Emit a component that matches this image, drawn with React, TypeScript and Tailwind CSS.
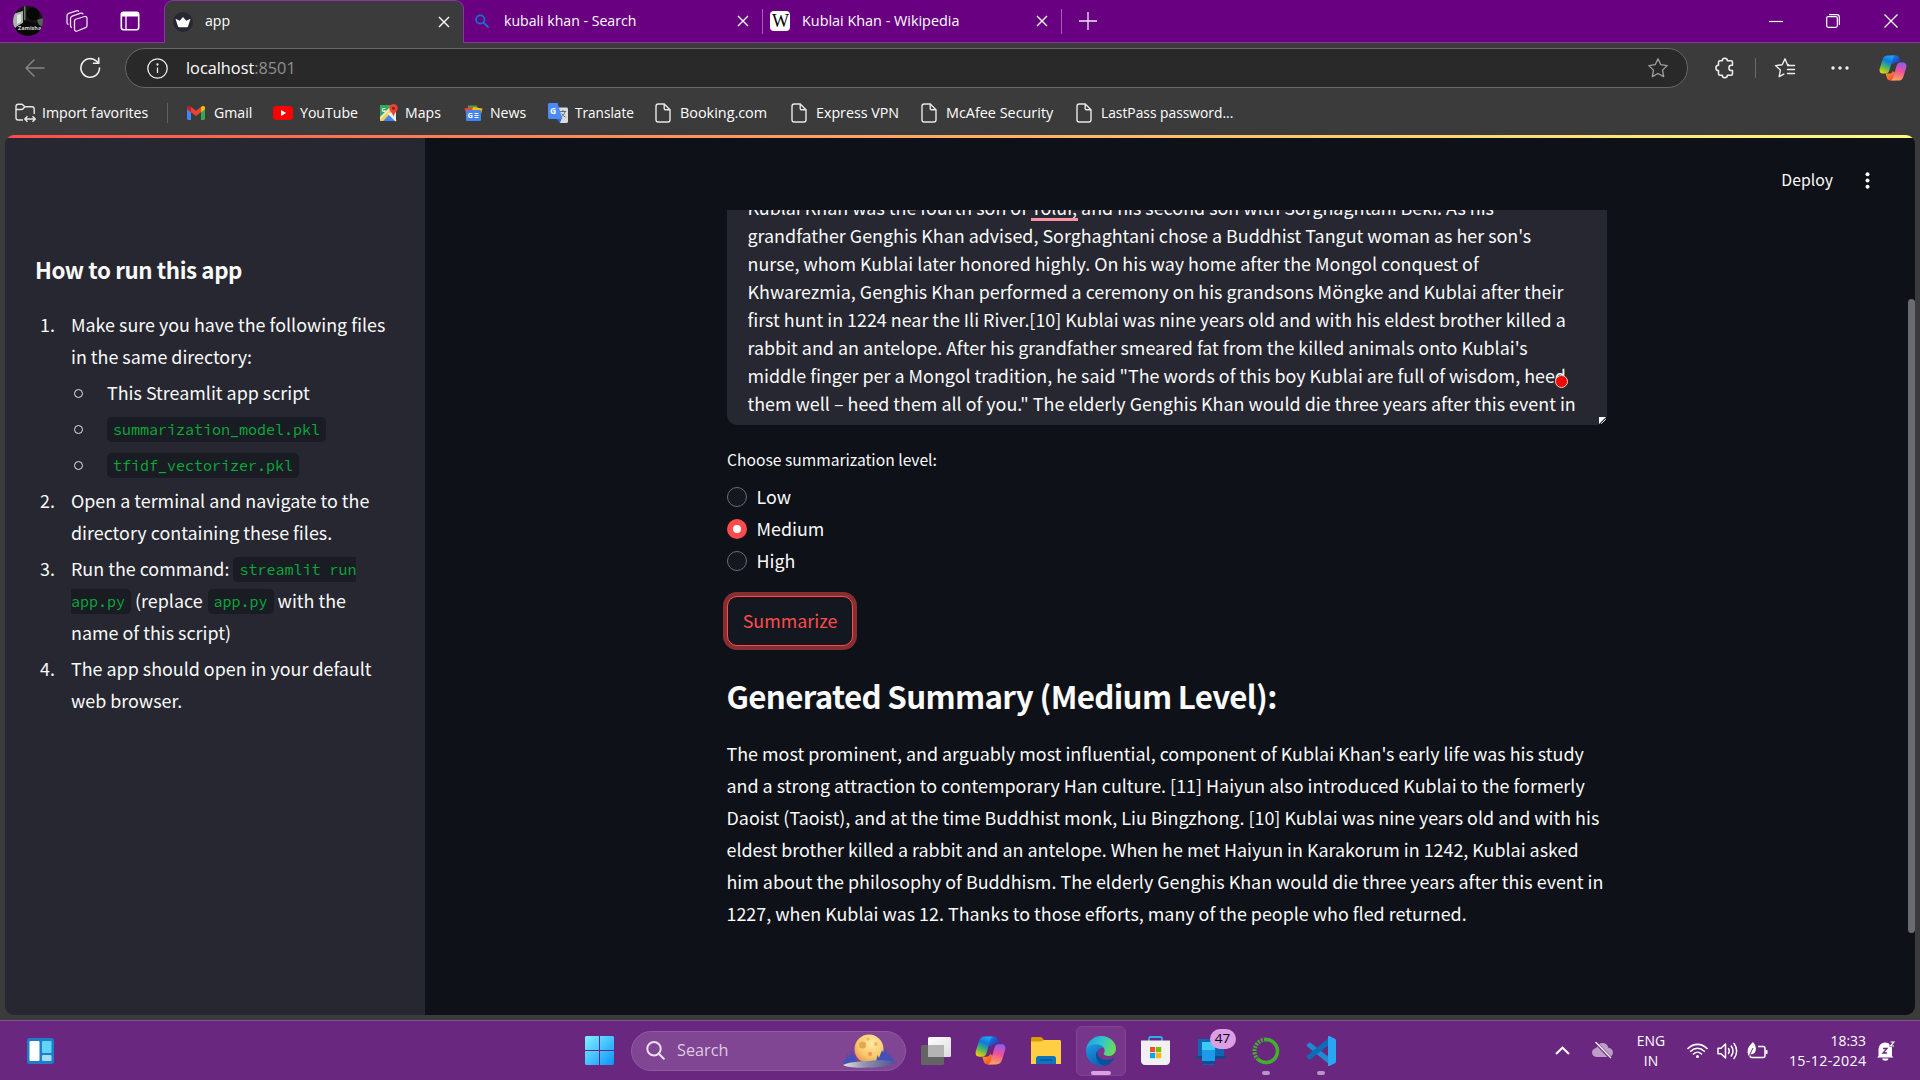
import React from 'react';

const tabItems = [
  { label: 'kubali khan - Search', kind: 'search' },
  { label: 'Kublai Khan - Wikipedia', kind: 'wiki' },
];

const inputLines = [
  'grandfather Genghis Khan advised, Sorghaghtani chose a Buddhist Tangut woman as her son\'s',
  'nurse, whom Kublai later honored highly. On his way home after the Mongol conquest of',
  'Khwarezmia, Genghis Khan performed a ceremony on his grandsons Möngke and Kublai after their',
  'first hunt in 1224 near the Ili River.[10] Kublai was nine years old and with his eldest brother killed a',
  'rabbit and an antelope. After his grandfather smeared fat from the killed animals onto Kublai\'s',
  'middle finger per a Mongol tradition, he said "The words of this boy Kublai are full of wisdom, heed',
  'them well – heed them all of you." The elderly Genghis Khan would die three years after this event in',
];

const summaryLines = [
  'The most prominent, and arguably most influential, component of Kublai Khan\'s early life was his study',
  'and a strong attraction to contemporary Han culture. [11] Haiyun also introduced Kublai to the formerly',
  'Daoist (Taoist), and at the time Buddhist monk, Liu Bingzhong. [10] Kublai was nine years old and with his',
  'eldest brother killed a rabbit and an antelope. When he met Haiyun in Karakorum in 1242, Kublai asked',
  'him about the philosophy of Buddhism. The elderly Genghis Khan would die three years after this event in',
  '1227, when Kublai was 12. Thanks to those efforts, many of the people who fled returned.',
];

/* ---------- icons ---------- */

function CloseX({ className = '' }: { className?: string }) {
  return (
    <svg className={className} width="12" height="12" viewBox="0 0 12 12" fill="none" stroke="white" strokeWidth="1.4">
      <path d="M1 1l10 10M11 1L1 11" />
    </svg>
  );
}

function Copilot({ size }: { size: number }) {
  return (
    <svg width={size} height={size} viewBox="0 0 30 30">
      <defs>
        <linearGradient id="cpA" x1="0.6" y1="0" x2="0.2" y2="1">
          <stop offset="0" stopColor="#1aa3f5" />
          <stop offset="0.3" stopColor="#1277dd" />
          <stop offset="0.6" stopColor="#3fb36d" />
          <stop offset="1" stopColor="#f6d100" />
        </linearGradient>
        <linearGradient id="cpB" x1="0.6" y1="0" x2="0.4" y2="1">
          <stop offset="0" stopColor="#8d5cf6" />
          <stop offset="0.45" stopColor="#ee4f9b" />
          <stop offset="1" stopColor="#fba45a" />
        </linearGradient>
        <linearGradient id="cpC" x1="0" y1="0" x2="1" y2="1">
          <stop offset="0" stopColor="#2285ea" />
          <stop offset="1" stopColor="#1a2fb5" />
        </linearGradient>
        <linearGradient id="cpD" x1="0" y1="0" x2="1" y2="1">
          <stop offset="0" stopColor="#fba31c" />
          <stop offset="1" stopColor="#ee3a3a" />
        </linearGradient>
      </defs>
      <path d="M12 1.5h6.200c2 0 3 1.200 3.600 3l1.200 4h-4c-2 0-3 1-3.500 2.800L13 10z" fill="url(#cpC)" />
      <path d="M18 28.500h-6c-2 0-3-1.200-3.600-3l-1.300-4.500h4c2 0 3-1 3.500-2.800L17 20z" fill="url(#cpD)" />
      <path d="M9.500 1.500h8c-1.500.6-2.300 2-2.800 3.800L11.300 17c-.7 2.500-1.800 4-4.300 4H4.500C1 21 0 18.500.9 15.300L3.800 6C4.700 3 6.500 1.500 9.500 1.500z" fill="url(#cpA)" />
      <path d="M20.500 28.500h-8c1.500-.6 2.300-2 2.800-3.800L18.700 13c.7-2.500 1.800-4 4.300-4h2.500c3.500 0 4.500 2.500 3.600 5.700L26.200 24c-.9 3-2.700 4.500-5.700 4.500z" fill="url(#cpB)" />
    </svg>
  );
}

function DocIcon() {
  return (
    <svg width="16" height="20" viewBox="0 0 16 20" fill="none" stroke="#e8e8e8" strokeWidth="1.400">
      <path d="M3.200 1h6L15 6.800v10c0 1.300-.9 2.200-2.200 2.200H3.200C1.900 19 1 18.100 1 16.800V3.200C1 1.900 1.900 1 3.200 1z" />
      <path d="M9.200 1v4.500c0 .8.500 1.300 1.300 1.300H15" />
    </svg>
  );
}

function ImportIcon() {
  return (
    <svg width="21" height="20" viewBox="0 0 21 20" fill="none" stroke="#e8e8e8" strokeWidth="1.400">
      <path d="M8 17H3.200C1.900 17 1 16.100 1 14.800V3.500C1 2.200 1.900 1.300 3.200 1.300h3.300c.6 0 1.100.2 1.500.6L9.800 3.700H17c1.300 0 2.200.9 2.200 2.200V11" />
      <path d="M1 6.500h5.500c.7 0 1.200-.2 1.600-.7l1.700-2.100" />
      <path d="M10 16h10M12.500 13.200L9.800 16l2.700 2.800M17.500 13.200l2.700 2.800-2.700 2.800" />
    </svg>
  );
}

function GmailIcon() {
  return (
    <svg width="18" height="14" viewBox="0 0 18 14">
      <path d="M0 1.800V12.600C0 13.400.6 14 1.400 14H4V5z" fill="#4285f4" />
      <path d="M18 1.800V12.600c0 .8-.6 1.400-1.400 1.400H14V5z" fill="#34a853" />
      <path d="M4 .9V6.300L9 10l5-3.700V.9L9 4.700z" fill="#ea4335" />
      <path d="M0 1.800V3.300L4 6.300V.9L3.300.4C1.900-.6 0 .2 0 1.800z" fill="#c5221f" />
      <path d="M18 1.800V3.300L14 6.300V.9l.7-.5C16.100-.6 18 .2 18 1.800z" fill="#fbbc04" />
    </svg>
  );
}

function YouTubeIcon() {
  return (
    <svg width="20" height="14" viewBox="0 0 20 14">
      <rect width="20" height="14" rx="3.500" fill="#f00" />
      <path d="M8 4l5.200 3L8 10z" fill="#fff" />
    </svg>
  );
}

function MapsIcon() {
  return (
    <svg width="18" height="18" viewBox="0 0 18 18">
      <rect y="1" width="16" height="16" rx="1.500" fill="#e8eaed" />
      <path d="M0 2.500C0 1.700.7 1 1.500 1H12L0 13z" fill="#34a853" />
      <path d="M0 15.500L10 5.500l2 2L3 17H1.500C.7 17 0 16.300 0 15.500z" fill="#fbd04a" />
      <path d="M3 17l6-6.300 6.500 6.100-.5.200z" fill="#4285f4" />
      <path d="M8 8.800L16 17" stroke="#fff" strokeWidth="1.200" />
      <text x="1.500" y="7.500" fontSize="6" fontWeight="700" fill="#fff" fontFamily="Open Sans">G</text>
      <path d="M13.500 0A4.200 4.200 0 0 0 9.300 4.200c0 3 3 3.800 4.200 8.300 1.200-4.500 4.200-5.300 4.200-8.300A4.200 4.200 0 0 0 13.500 0z" fill="#ea4335" />
      <circle cx="13.500" cy="4.200" r="1.500" fill="#8c1d13" />
    </svg>
  );
}

function NewsIcon() {
  return (
    <svg width="19" height="16" viewBox="0 0 19 16">
      <path d="M4 .5h9l1 4H4z" fill="#34a853" />
      <path d="M.5 3.500L10 1.500l1 4-9 3z" fill="#ea4335" />
      <path d="M9 2l9.500 1.500L17 9 8 6z" fill="#fbbc04" />
      <rect x="2" y="5" width="15" height="11" rx="1.200" fill="#4285f4" />
      <text x="3.500" y="13.300" fontSize="7.500" fontWeight="700" fill="#fff" fontFamily="Open Sans">G</text>
      <path d="M10.500 8.500h4M10.500 10.500h4M10.500 12.500h4" stroke="#fff" strokeWidth="1" />
    </svg>
  );
}

function TranslateIcon() {
  return (
    <svg width="20" height="20" viewBox="0 0 20 20">
      <path d="M8 4.500h10.500c.8 0 1.500.7 1.500 1.500v12.500c0 .8-.7 1.500-1.500 1.500H12z" fill="#dadce0" />
      <path d="M8.500 16h5L12 20z" fill="#3367d6" />
      <path d="M1.500 0H9.500l5 16h-13C.7 16 0 15.300 0 14.500v-13C0 .7.700 0 1.500 0z" fill="#4c8bf5" />
      <text x="2" y="11" fontSize="8.500" fontWeight="700" fill="#fff" fontFamily="Open Sans">G</text>
      <path d="M12.200 8.500h6M15 7v1.500M17 8.500c-.5 2.500-2 4-3.500 5M13.800 10.500c.8 1.500 2.200 2.800 3.700 3.800" stroke="#5f6e7d" strokeWidth="1" fill="none" />
    </svg>
  );
}

function StarOutline() {
  return (
    <svg width="22" height="22" viewBox="0 0 22 22" fill="none" stroke="#a0a0a0" strokeWidth="1.300" strokeLinejoin="round">
      <path d="M11 1.800l2.800 5.900 6.400.9-4.700 4.500 1.200 6.500L11 16.500l-5.700 3.100 1.200-6.500L1.800 8.600l6.400-.9z" />
    </svg>
  );
}

function PuzzleIcon() {
  return (
    <svg width="22" height="22" viewBox="0 0 22 22" fill="none" stroke="#efefef" strokeWidth="1.500" strokeLinejoin="round">
      <path d="M8.300 3.800a2.500 2.500 0 0 1 5 0H17c.9 0 1.500.6 1.500 1.500v3h-1a2.600 2.600 0 0 0 0 5.200h1v3.200c0 .9-.6 1.500-1.500 1.500h-3.700a2.500 2.500 0 0 1-5 0H6c-.9 0-1.500-.6-1.500-1.500v-3.200a2.600 2.600 0 0 1 0-5.200v-3c0-.9.600-1.500 1.500-1.500z" />
    </svg>
  );
}

function FavoritesIcon() {
  return (
    <svg width="22" height="22" viewBox="0 0 22 22" fill="none" stroke="#efefef" strokeWidth="1.400" strokeLinejoin="round" strokeLinecap="round">
      <path d="M14.500 7.700h-1L11 1.800 8.200 7.700l-6.700.9 4.900 4.500-1.200 6.500 4.600-2.500" />
      <path d="M13.500 8.500h7M13.500 12.500h7M13.500 16.500h7" />
    </svg>
  );
}

function EdgeIcon() {
  return (
    <svg width="30" height="30" viewBox="0 0 30 30">
      <defs>
        <linearGradient id="egA" x1="0" y1="0.2" x2="1" y2="0.5">
          <stop offset="0" stopColor="#1ba0e0" />
          <stop offset="0.5" stopColor="#2fc6cf" />
          <stop offset="1" stopColor="#6ddc55" />
        </linearGradient>
        <linearGradient id="egB" x1="0" y1="0" x2="0.5" y2="1">
          <stop offset="0" stopColor="#1b9de2" />
          <stop offset="1" stopColor="#0f62b8" />
        </linearGradient>
      </defs>
      <path d="M0 14.500C.5 6.300 7 0 15 0c8.500 0 15 6 15 12.500 0 4.200-3 7.500-7.300 7.500-3 0-5-1-5-2.200 0-.8 1-1.200 1-3.300 0-3-3-5.500-6.700-5.500C6.500 9 1.500 11 0 14.500z" fill="url(#egA)" />
      <path d="M0 14.500C1.500 9.800 6 7.500 11 8.300c3.300.5 5.800 2 6.800 3.900-3-1-6.300 1-7 4.500-1 5.500 3 11 8.700 12.500-1.500.5-3 .8-4.500.8C6.500 30 0 23.500 0 14.500z" fill="url(#egB)" />
      <path d="M11.500 14.500c-1.500 5 3.500 9.500 9 9.500 2.800 0 5-.8 6.500-1.700.7-.4 1.200.3.800.9C25.500 27 22 29.500 18.700 29.800 12 28.500 7.500 20 11.500 14.500z" fill="#0c4f98" />
    </svg>
  );
}

function SearchArt() {
  return (
    <svg width="54" height="34" viewBox="0 0 54 34">
      <defs>
        <radialGradient id="moon" cx="0.6" cy="0.3" r="0.8">
          <stop offset="0" stopColor="#ffe9a4" />
          <stop offset="0.6" stopColor="#f8c869" />
          <stop offset="1" stopColor="#e08a5a" />
        </radialGradient>
        <linearGradient id="snow" x1="0" y1="0" x2="1" y2="0">
          <stop offset="0" stopColor="#e6e4dc" />
          <stop offset="0.4" stopColor="#8e93ae" />
          <stop offset="1" stopColor="#4a4f94" />
        </linearGradient>
      </defs>
      <circle cx="26" cy="15" r="14.500" fill="url(#moon)" />
      <circle cx="19.500" cy="11" r="3.600" fill="#e0a850" />
      <circle cx="33" cy="10" r="2" fill="#f0bb5f" />
      <circle cx="27" cy="20" r="2.200" fill="#f09a60" />
      <circle cx="25" cy="5" r="1.800" fill="#edbb62" />
      <path d="M0 30l1.500-5 1 2 2-7 1.500 4 2.500-7 2 6 1.500-2 2.500 9zM33 28l1.500-7 1.500 3 3-8 1.500 3 2-5 2.500 8 2-3 1.500 5 1-1 2 5z" fill="#4350b5" />
      <path d="M0 31C8 27 20 28 30 26.500c10-1.500 18 0 24 1.500-6 4-16 5.500-29 5.500-13 .5-20 0-25-2.500z" fill="url(#snow)" />
    </svg>
  );
}

function TaskIcon({ children, active = false, dot = false }: { children: React.ReactNode; active?: boolean; dot?: boolean }) {
  return (
    <div className="flex h-[60px] w-[55px] items-center justify-center">
      <div className={active ? 'relative flex h-[50px] w-[50px] items-center justify-center rounded-[6px] border border-[#7f4791] bg-[#76368b]' : 'relative flex h-[50px] w-[50px] items-center justify-center'}>
        {children}
        {active && <span className="absolute bottom-0 left-[14px] h-[4px] w-[20px] rounded-full bg-[#dc9fe6]" />}
        {dot && <span className="absolute bottom-[1px] left-[21px] h-[4px] w-[8px] rounded-full bg-[#b795c4]" />}
      </div>
    </div>
  );
}

/* ---------- browser chrome ---------- */

function TabStrip() {
  return (
    <div className="flex h-[43px] w-full shrink-0 bg-[#680081] text-[14.100px] text-white">
      <div className="flex w-[164px] shrink-0 items-center border-b border-[#8a35a2] pl-[13px]">
        <svg width="30" height="30" viewBox="0 0 30 30">
          <defs><clipPath id="avatar"><circle cx="15" cy="15" r="15" /></clipPath></defs>
          <g clipPath="url(#avatar)">
            <rect width="30" height="30" fill="#151714" />
            <path d="M0 8L10 5v14l-7 3-3-2z" fill="#a8b3ad" />
            <path d="M4 9l4-1v8l-4 2z" fill="#dfe5e1" />
            <path d="M11 0h1.500v14H11z" fill="#6d756f" />
            <circle cx="20" cy="8" r="6.500" fill="#070707" />
            <path d="M3 21l10-6 14 3v12H4z" fill="#080808" />
            <path d="M24 14l6-2v9l-4-2z" fill="#59615c" />
            <text x="5" y="24" fontSize="5.500" fontWeight="700" fill="#d5d5d5" fontFamily="Open Sans">Zamisha</text>
          </g>
        </svg>
        <svg className="ml-[23px]" width="22" height="22" viewBox="0 0 22 22" fill="none" stroke="#f0dff5" strokeWidth="1.300" strokeLinejoin="round">
          <path d="M9 9.500l9.500-3c1.300-.4 2.500.4 2.500 1.700v7.300c0 1-.5 1.700-1.500 2.100L11.300 21c-1.500.6-2.800-.2-2.800-1.700v-8z" />
          <path d="M6 17.500c-1 0-1.500-.8-1.500-1.800V8.500c0-1.300.6-2 1.700-2.400l8.500-2.900c1.200-.3 2 0 2.500 1" />
          <path d="M2.500 14.500C1.500 14.300 1 13.500 1 12.500V5.700c0-1.200.6-2 1.700-2.400L10.500.8c1.200-.3 2 .1 2.400.9" />
        </svg>
        <svg className="ml-[32px]" width="20" height="20" viewBox="0 0 20 20" fill="none" stroke="#fff" strokeWidth="1.600">
          <rect x="1.300" y="1.300" width="17.400" height="17.400" rx="2.200" />
          <path d="M1.300 3.500h17.400" strokeWidth="4" />
          <path d="M6 5v13.500" strokeWidth="1.300" />
        </svg>
      </div>
      <div className="flex h-[43px] w-[300px] shrink-0 items-center rounded-t-[9px] border border-b-0 border-[#8a35a2] bg-[#3b3b3b] pl-[8px]">
        <svg width="20" height="20" viewBox="0 0 20 20">
          <circle cx="10" cy="10" r="10" fill="#262730" />
          <path d="M2.500 6.800l4.200 2L10 5l3.300 3.800 4.200-2L15 14.500c-.2.600-.6.800-1.200.8H6.200c-.6 0-1-.2-1.200-.8z" fill="#fff" />
        </svg>
        <span className="ml-[12px] h-[20px] w-[228px] leading-[18px]">app</span>
        <CloseX className="ml-[5px]" />
      </div>
      <div className="flex flex-1 items-center border-b border-[#8a35a2]">
        {tabItems.map((t) => (
          <React.Fragment key={t.label}>
            {t.kind === 'search' ? (
              <svg className="ml-[11px]" width="14" height="14" viewBox="0 0 14 14" fill="none" stroke="#1373cf" strokeWidth="1.800" strokeLinecap="round">
                <circle cx="5.300" cy="5.500" r="4.200" />
                <path d="M8.500 8.700l4.500 4.300" />
              </svg>
            ) : (
              <span className="ml-[7px] flex h-[20px] w-[20px] items-center justify-center rounded-[4px] bg-white font-['Liberation_Serif',serif] text-[18px] leading-none tracking-[-1px] text-black">W</span>
            )}
            <span className={t.kind === 'search' ? 'ml-[15px] h-[20px] w-[227px] whitespace-nowrap leading-[20px]' : 'ml-[12px] h-[20px] w-[228px] whitespace-nowrap text-[14.400px] leading-[20px]'}>{t.label}</span>
            <CloseX className="ml-[6px]" />
            <span className="ml-[13px] h-[25px] w-px bg-[#a45cb6]" />
          </React.Fragment>
        ))}
        <svg className="ml-[17px]" width="18" height="18" viewBox="0 0 18 18" stroke="#f4e8f7" strokeWidth="1.300"><path d="M9 0v18M0 9h18" /></svg>
        <div className="ml-auto flex items-center pr-[22px]">
          <svg width="14" height="14" viewBox="0 0 14 14" stroke="#fff" strokeWidth="1.200"><path d="M0 7.500h14" /></svg>
          <svg className="ml-[43px]" width="14" height="14" viewBox="0 0 14 14" fill="none" stroke="#fff" strokeWidth="1.200">
            <rect x=".7" y="2.700" width="10.600" height="10.600" rx="1.500" />
            <path d="M3 .7h8c1.300 0 2.300 1 2.300 2.300v8" />
          </svg>
          <svg className="ml-[44px]" width="14" height="14" viewBox="0 0 14 14" stroke="#fff" strokeWidth="1.300"><path d="M.5.5l13 13M13.500.5l-13 13" /></svg>
        </div>
      </div>
    </div>
  );
}

function AddressRow() {
  return (
    <div className="flex h-[49px] w-full shrink-0 items-center pt-px">
      <svg className="ml-[25px]" width="20" height="18" viewBox="0 0 20 18" fill="none" stroke="#858585" strokeWidth="1.500" strokeLinecap="round" strokeLinejoin="round"><path d="M19 9H1M9 1L1 9l8 8" /></svg>
      <svg className="ml-[34px]" width="22" height="22" viewBox="0 0 22 22" fill="none" stroke="#f0f0f0" strokeWidth="1.600" strokeLinecap="round" strokeLinejoin="round">
        <path d="M20.500 11a9.300 9.300 0 1 1-3-6.900l2 1.900" />
        <path d="M19.700 1v5.300h-5.200" />
      </svg>
      <div className="ml-[24px] flex h-[40px] w-[1563px] shrink-0 items-center rounded-full border border-[#676767] bg-[#292929] pl-[21px]">
        <svg width="21" height="21" viewBox="0 0 21 21" fill="none" stroke="#f0f0f0" strokeWidth="1.300">
          <circle cx="10.500" cy="10.500" r="9.700" />
          <path d="M10.500 9.500v5.500" /><circle cx="10.500" cy="6.500" r=".5" fill="#f0f0f0" />
        </svg>
        <span className="ml-[18px] text-[16.300px] leading-[20px] text-white">localhost<span className="text-[#8f8f8f]">:8501</span></span>
        <span className="ml-auto mr-[18px]"><StarOutline /></span>
      </div>
      <span className="ml-[26px]"><PuzzleIcon /></span>
      <span className="ml-[19px] h-[20px] w-px bg-[#6a6a6a]" />
      <span className="ml-[18px]"><FavoritesIcon /></span>
      <svg className="ml-[35px]" width="18" height="4" viewBox="0 0 18 4" fill="#f0f0f0"><circle cx="2" cy="2" r="1.700" /><circle cx="9" cy="2" r="1.700" /><circle cx="16" cy="2" r="1.700" /></svg>
      <span className="ml-[30px]"><Copilot size={28} /></span>
    </div>
  );
}

function Bookmark({ icon, label, slot, gap, text }: { icon: React.ReactNode; label: string; slot: string; gap: string; text?: string }) {
  return (
    <div className={'flex shrink-0 items-center whitespace-nowrap ' + slot}>
      {icon}
      <span className={gap + ' ' + (text ?? 'text-[14.100px]')}>{label}</span>
    </div>
  );
}

function BookmarksRow() {
  return (
    <div className="flex h-[43px] w-full shrink-0 items-center pl-[15px] pb-[2px] leading-[20px] text-white">
      <Bookmark icon={<ImportIcon />} label="Import favorites" slot="w-[152px]" gap="ml-[6px]" text="text-[14.200px]" />
      <span className="h-[20px] w-px bg-[#606060]" />
      <Bookmark icon={<GmailIcon />} label="Gmail" slot="ml-[19px] w-[86px]" gap="ml-[9px]" />
      <Bookmark icon={<YouTubeIcon />} label="YouTube" slot="w-[107px]" gap="ml-[7px]" />
      <Bookmark icon={<MapsIcon />} label="Maps" slot="w-[84px]" gap="ml-[7px]" />
      <Bookmark icon={<NewsIcon />} label="News" slot="w-[84px]" gap="ml-[7px]" />
      <Bookmark icon={<TranslateIcon />} label="Translate" slot="w-[107px]" gap="ml-[7px]" text="text-[13.600px]" />
      <Bookmark icon={<DocIcon />} label="Booking.com" slot="w-[136px]" gap="ml-[9px]" text="text-[14.400px]" />
      <Bookmark icon={<DocIcon />} label="Express VPN" slot="w-[130px]" gap="ml-[9px]" text="text-[14.250px]" />
      <Bookmark icon={<DocIcon />} label="McAfee Security" slot="w-[155px]" gap="ml-[9px]" text="text-[14.400px]" />
      <Bookmark icon={<DocIcon />} label="LastPass password..." slot="w-[170px]" gap="ml-[9px]" text="text-[13.800px]" />
    </div>
  );
}

/* ---------- page ---------- */

const codeFont = "font-['Source_Code_Pro','Liberation_Mono',monospace]";

function Code({ children, className = 'rounded-[5px] px-[6px]' }: { children: string; className?: string }) {
  return <code className={'mt-[2px] inline-block h-[25px] bg-[#1a1c24] align-middle text-[15px] leading-[25px] text-[#09ab3b] ' + codeFont + ' ' + className}>{children}</code>;
}

function Step({ n, children }: { n: number; children: React.ReactNode }) {
  return (
    <li className="flex">
      <span className="w-[36px] shrink-0 pl-[5px]">{n}.</span>
      <div className="whitespace-nowrap">{children}</div>
    </li>
  );
}

function SubItem({ children }: { children: React.ReactNode }) {
  return (
    <li className="flex h-[32px] items-center">
      <span className="ml-[3px] mr-[24px] mt-[2px] h-[9px] w-[9px] shrink-0 rounded-full border-[1.500px] border-[#e6e7ea]" />
      {children}
    </li>
  );
}

function Sidebar() {
  return (
    <aside className="w-[420px] shrink-0 bg-[#262730] pl-[30px] pt-[116px]">
      <h3 className="text-[22.300px] font-bold leading-[30px] tracking-[-0.400px]">How to run this app</h3>
      <ol className="mt-[24px] flex flex-col gap-[4px] text-[17.900px] leading-[32px]">
        <Step n={1}>
          <div>Make sure you have the following files</div>
          <div>in the same directory:</div>
          <ul className="mt-[4px] flex flex-col gap-[4px]">
            <SubItem>This Streamlit app script</SubItem>
            <SubItem><Code>summarization_model.pkl</Code></SubItem>
            <SubItem><Code>tfidf_vectorizer.pkl</Code></SubItem>
          </ul>
        </Step>
        <Step n={2}>
          <div>Open a terminal and navigate to the</div>
          <div>directory containing these files.</div>
        </Step>
        <Step n={3}>
          <div className="flex h-[32px] items-center">Run the command:<Code className="ml-[4px] rounded-l-[5px] pl-[6px]">streamlit run</Code></div>
          <div className="flex h-[32px] items-center">
            <Code className="rounded-r-[5px] pr-[6px]">app.py</Code>
            <span className="ml-[4px] mr-[5px]">(replace</span>
            <Code>app.py</Code>
            <span className="ml-[4px]">with the</span>
          </div>
          <div>name of this script)</div>
        </Step>
        <Step n={4}>
          <div>The app should open in your default</div>
          <div>web browser.</div>
        </Step>
      </ol>
    </aside>
  );
}

function Radio({ label, checked = false }: { label: string; checked?: boolean }) {
  return (
    <div className="flex h-[32px] items-center">
      <span className={checked ? 'flex h-[20px] w-[20px] items-center justify-center rounded-full bg-[#ff4b4b]' : 'h-[20px] w-[20px] rounded-full border border-[#6c6e75] bg-[#131720]'}>
        {checked && <span className="h-[8px] w-[8px] rounded-full bg-white" />}
      </span>
      <span className="mb-[2px] ml-[9.500px] text-[17.880px]">{label}</span>
    </div>
  );
}

function MainPane() {
  return (
    <main className="flex flex-1 flex-col bg-[#0e1117]">
      <div className="flex h-[72px] shrink-0 items-center justify-end pr-[45px] pt-[12px]">
        <span className="text-[15.800px] leading-[24px]">Deploy</span>
        <svg className="ml-[32px]" width="5" height="17" viewBox="0 0 5 17" fill="#fff"><circle cx="2.500" cy="2.200" r="2" /><circle cx="2.500" cy="8.500" r="2" /><circle cx="2.500" cy="14.800" r="2" /></svg>
      </div>
      <div className="ml-[302px] w-[900px]">
        <div className="relative h-[215px] w-[880px] overflow-hidden rounded-b-[10px] bg-[#262730] pl-[20.500px] text-[17.900px] leading-[28px]">
          <div className="-mt-[17px] whitespace-nowrap">
            <div>Kublai Khan was the fourth son of <span className="relative">Tolui,<span className="absolute left-0 -right-[1px] top-[24px] h-[3px] bg-[#ff91a4]" /></span> and his second son with Sorghaghtani Beki. As his</div>
            {inputLines.map((l) => <div key={l}>{l}</div>)}
          </div>
          <svg className="absolute bottom-0 right-0" width="8" height="8" viewBox="0 0 8 8">
            <path d="M0 0h7L0 7z" fill="#fff" /><path d="M7 2L2 7M7 5L5 7" stroke="#ddd" strokeWidth="1" />
          </svg>
          <span className="absolute left-[828px] top-[165px] h-[13px] w-[13px] rounded-full border border-[#f6c9c9] bg-[#f00800]" />
        </div>
        <div className="mt-[25px] text-[15.650px] leading-[20px]">Choose summarization level:</div>
        <div className="mt-[11px]">
          <Radio label="Low" />
          <Radio label="Medium" checked />
          <Radio label="High" />
        </div>
        <button className="mt-[19px] block h-[50px] w-[126px] rounded-[10px] border border-[#ff4b4b] bg-[#131720] pb-[2px] text-[17.880px] leading-[46px] text-[#ff4b4b] shadow-[0_0_0_4px_#872e33]">Summarize</button>
        <h2 className="-ml-[0.500px] mt-[30px] whitespace-nowrap text-[31.300px] font-bold leading-[40px] tracking-[-0.660px]">Generated Summary (Medium Level):</h2>
        <div className="-ml-[0.500px] mt-[21px] whitespace-nowrap text-[17.900px] leading-[32px]">
          {summaryLines.map((l) => <div key={l}>{l}</div>)}
        </div>
      </div>
    </main>
  );
}

/* ---------- taskbar ---------- */

function Taskbar() {
  return (
    <footer className="flex h-[60px] w-full shrink-0 items-center border-t border-[#80508f] bg-[#69277f] text-white">
      <div className="w-[585px] shrink-0 pl-[27px]">
        <svg width="27" height="26" viewBox="0 0 27 26">
          <rect width="27" height="26" rx="2.500" fill="#1f7ccb" />
          <rect x="2.500" y="3" width="10" height="20" rx="1" fill="#fff" />
          <rect x="15" y="3" width="9.500" height="12" rx="1" fill="#5fd3f9" />
          <rect x="15" y="17" width="9.500" height="6" rx="1" fill="#a8ddf8" />
        </svg>
      </div>
      <svg width="29" height="29" viewBox="0 0 29 29">
        <defs><linearGradient id="win" x1="0" y1="0" x2="1" y2="1"><stop offset="0" stopColor="#80f0ff" /><stop offset="1" stopColor="#0b93fb" /></linearGradient></defs>
        <path d="M1.500 0H14v14H0V1.500C0 .7.700 0 1.500 0zM15 0h12.500c.8 0 1.500.7 1.500 1.500V14H15zM0 15h14v14H1.500C.7 29 0 28.300 0 27.500zM15 15h14v12.500c0 .8-.7 1.500-1.500 1.500H15z" fill="url(#win)" />
      </svg>
      <div className="ml-[17px] flex h-[40px] w-[275px] shrink-0 items-center rounded-full border border-[#91599f] bg-[#804593] pl-[14px]">
        <svg width="19" height="19" viewBox="0 0 19 19" fill="none" stroke="#ecdff0" strokeWidth="2" strokeLinecap="round"><circle cx="8" cy="7.800" r="6.700" /><path d="M12.800 12.800l5 5" /></svg>
        <span className="ml-[12px] text-[16.300px] text-[#dccbe2]">Search</span>
        <span className="ml-auto mr-[8px]"><SearchArt /></span>
      </div>
      <div className="ml-[2px] flex">
        <TaskIcon>
          <svg width="30" height="28" viewBox="0 0 30 28">
            <defs><linearGradient id="tv" x1="0" y1="0" x2="1" y2="1"><stop offset="0" stopColor="#fff" /><stop offset="1" stopColor="#dcdcdc" /></linearGradient></defs>
            <rect x="0" y="8" width="23" height="20" rx="1.500" fill="#646464" />
            <rect x="7" y="0" width="23" height="20" rx="1.500" fill="url(#tv)" />
            <rect x="7" y="8" width="16" height="12" fill="#b4b4b4" />
          </svg>
        </TaskIcon>
        <TaskIcon><Copilot size={31} /></TaskIcon>
        <TaskIcon>
          <svg width="30" height="27" viewBox="0 0 30 27">
            <path d="M0 1.500C0 .7.700 0 1.500 0h8c.6 0 1 .2 1.400.6L13 3v6H0z" fill="#dd9a00" />
            <path d="M0 4.500h10l3-1.500h15.500c.8 0 1.500.7 1.500 1.500V27H0z" fill="#ffce43" />
            <path d="M5 27v-5.500C5 20 6 19 7.500 19h15c1.500 0 2.500 1 2.500 2.500V27z" fill="#0f74bd" />
            <path d="M9 23h12" stroke="#0a4f8c" strokeWidth="1.200" />
          </svg>
        </TaskIcon>
        <TaskIcon active><EdgeIcon /></TaskIcon>
        <TaskIcon>
          <svg width="29" height="29" viewBox="0 0 29 29">
            <path d="M8 5V2.500C8 1.700 8.700 1 9.500 1h10c.8 0 1.500.7 1.500 1.500V5" fill="none" stroke="#28b0ef" strokeWidth="1.800" />
            <path d="M0 4.500h29V25c0 2.300-1.700 4-4 4H4c-2.300 0-4-1.700-4-4z" fill="#f1f1f3" />
            <rect x="9" y="11" width="5.200" height="5.200" fill="#f25022" /><rect x="15" y="11" width="5.200" height="5.200" fill="#7fba00" />
            <rect x="9" y="17" width="5.200" height="5.200" fill="#00a4ef" /><rect x="15" y="17" width="5.200" height="5.200" fill="#ffb900" />
          </svg>
        </TaskIcon>
        <TaskIcon>
          <svg width="30" height="28" viewBox="0 0 30 28">
            <path d="M2 2h26v18H2z" fill="#0f66b4" />
            <path d="M0 19h30l-1 2.500H1z" fill="#0a4a8c" />
            <path d="M6 5h13v22.500H6z" fill="#1c9be6" />
            <path d="M6 5h13v8H6z" fill="#3ccbf4" /><path d="M6 24h13v3.500H6z" fill="#0d4e94" />
          </svg>
          <span className="absolute left-[24px] top-[3px] flex h-[20px] w-[26px] items-center justify-center rounded-full bg-[#dc9fe6] text-[13.500px] leading-none text-black">47</span>
        </TaskIcon>
        <TaskIcon dot>
          <svg width="28" height="28" viewBox="0 0 28 28" fill="none" stroke="#43b02a">
            <path d="M14 2.500a11.500 11.500 0 1 1-8 19.800" strokeWidth="3.600" />
            <path d="M14 2.500a11.500 11.500 0 0 0-8 19.800" strokeWidth="4" strokeDasharray="2 1.200" />
          </svg>
        </TaskIcon>
        <TaskIcon dot>
          <svg width="30" height="30" viewBox="0 0 30 30">
            <path d="M1 8.500l2-1.700c.5-.4 1-.4 1.500 0L24 22v7L1.200 10.500c-.6-.5-.7-1.400-.2-2z" fill="#1f8ad2" />
            <path d="M1 21.500l2 1.700c.5.4 1 .4 1.500 0L24 8V1L1.200 19.500c-.6.5-.7 1.400-.2 2z" fill="#0b6db8" />
            <path d="M22 .3c.5-.4 1.200-.4 1.700-.1l5.300 2.600c.7.300 1 .9 1 1.600v21.200c0 .7-.3 1.300-1 1.600l-5.300 2.600c-.5.300-1.200.3-1.700-.1z" fill="#2aa5f3" />
          </svg>
        </TaskIcon>
      </div>
      <div className="ml-auto flex items-center">
        <svg width="15" height="9" viewBox="0 0 15 9" fill="none" stroke="#fff" strokeWidth="2"><path d="M1 8l6.500-6.300L14 8" /></svg>
        <svg className="ml-[22px]" width="21" height="17" viewBox="0 0 21 17">
          <path d="M5 15C2 15 0 13 0 10.500S2 6.300 4.300 6C5 3 7.500 1 10.500 1s5.300 2 5.800 4.800C19 6 21 8 21 10.500S19 15 16.500 15z" fill="#bd9cc8" />
          <path d="M3 0l16 16.500" stroke="#69277f" strokeWidth="3" /><path d="M3.500 0l15.500 16" stroke="#fff" strokeWidth="1.300" />
        </svg>
        <div className="ml-[21px] w-[34px] text-center text-[13.900px] leading-[20px]"><div>ENG</div><div>IN</div></div>
        <svg className="ml-[19px]" width="21" height="16" viewBox="0 0 21 16" fill="none" stroke="#fff" strokeWidth="1.600" strokeLinecap="round">
          <path d="M1 5.500c5.500-5.500 13.500-5.500 19 0M3.700 8.300c4-4 9.600-4 13.600 0M6.500 11c2.400-2.400 5.600-2.400 8 0" /><circle cx="10.500" cy="13.500" r="1.500" fill="#fff" stroke="none" />
        </svg>
        <svg className="ml-[9px]" width="21" height="18" viewBox="0 0 21 18" fill="none" stroke="#fff" strokeWidth="1.500" strokeLinecap="round" strokeLinejoin="round">
          <path d="M1 6.300h3L8.500 2v14L4 11.700H1z" /><path d="M11.500 6.500c1 1.500 1 3.500 0 5M14.200 4c2.200 3 2.200 7 0 10M17 1.500c3.500 4.500 3.500 10.500 0 15" />
        </svg>
        <svg className="ml-[9px]" width="21" height="18" viewBox="0 0 21 18" fill="none" stroke="#fff" strokeWidth="1.500">
          <path d="M11 4.500h5c1.200 0 2 .8 2 2v7c0 1.200-.8 2-2 2H5c-1.200 0-2-.8-2-2" /><path d="M19.500 8v4" strokeWidth="2" />
          <path d="M1 12C-.5 7 2 4 6 0c3 3.500 4 7.500 1.500 11C6 12.500 3.500 12.500 3 12L1 14" fill="#fff" stroke="none" />
          <path d="M3 12l3-6" stroke="#69277f" strokeWidth="1" />
        </svg>
        <div className="ml-[18px] w-[80px] text-right text-[14.300px] leading-[20px]"><div className="text-[13.900px]">18:33</div><div className="-mr-[0.500px] tracking-[0.300px]">15-12-2024</div></div>
        <svg className="ml-[11px]" width="18" height="20" viewBox="0 0 18 20">
          <path d="M1.500 15V8a6.500 6.500 0 0 1 7-6.500A6.500 6.500 0 0 1 15 8v7l1.500 1.500H0z" fill="#fff" />
          <path d="M5 17.500h6.500c-.4 1.500-1.500 2.200-3.200 2.200S5.400 19 5 17.500z" fill="#fff" />
          <path d="M6 7.500h4L6 12h4" fill="none" stroke="#69277f" strokeWidth="1.300" />
          <path d="M12.500 0H18v6h-5.500z" fill="#69277f" /><path d="M13.500 1h3.500L13.500 5H17" fill="none" stroke="#fff" strokeWidth="1.200" />
        </svg>
        <span className="w-[25px]" />
      </div>
    </footer>
  );
}

export default function App() {
  return (
    <div className="flex h-[1080px] w-[1920px] flex-col overflow-hidden bg-[#3b3b3b] font-['Open_Sans','Noto_Sans',sans-serif]">
      <TabStrip />
      <AddressRow />
      <BookmarksRow />
      <div className="mx-[5px] mb-[5px] flex h-[880px] shrink-0 flex-col overflow-hidden rounded-[9px] font-['Noto_Sans_CJK_SC',sans-serif] text-[#fafafa]">
        <div className="h-[3px] shrink-0 bg-linear-to-r from-[#ff4b4b] to-[#fffd80]" />
        <div className="relative flex flex-1">
          <Sidebar />
          <MainPane />
          <div className="absolute right-0 top-[161px] h-[634px] w-[7px] rounded-full bg-[#6a6c72]" />
        </div>
      </div>
      <Taskbar />
    </div>
  );
}
